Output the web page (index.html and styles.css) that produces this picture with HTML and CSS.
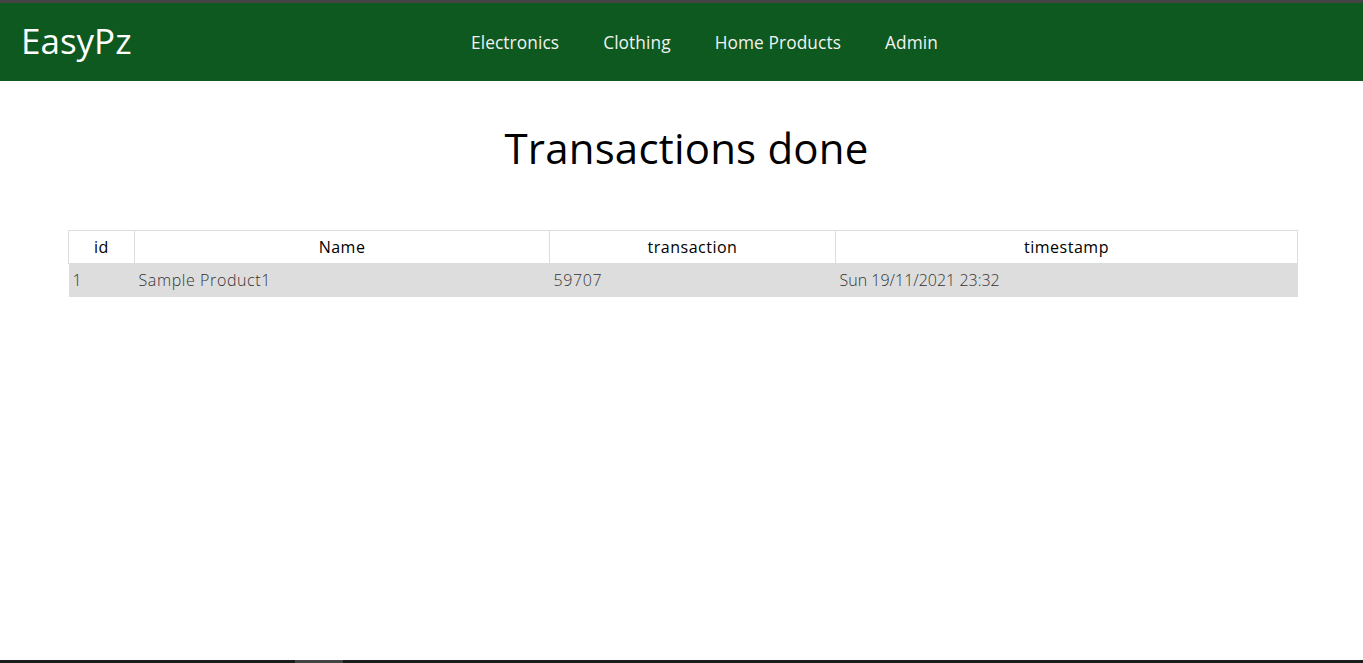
FILE: index.html
```html
<!DOCTYPE html>
<html lang="en">
<head>
<meta charset="utf-8">
<title>EasyPz - Transactions</title>
<link rel="stylesheet" href="styles.css">
</head>
<body>
<div class="topstrip"></div>
<header class="navbar">
  <a class="brand" href="#">EasyPz</a>
  <nav class="links">
    <a href="#">Electronics</a>
    <a href="#">Clothing</a>
    <a href="#">Home Products</a>
    <a href="#">Admin</a>
  </nav>
</header>
<main class="content">
  <h1 class="title">Transactions done</h1>
  <table class="tx">
    <thead>
      <tr>
        <th class="c-id">id</th>
        <th class="c-name">Name</th>
        <th class="c-tx">transaction</th>
        <th class="c-ts">timestamp</th>
      </tr>
    </thead>
    <tbody>
      <tr>
        <td>1</td>
        <td>Sample Product1</td>
        <td>59707</td>
        <td class="ts">Sun 19/11/2021 23:32</td>
      </tr>
    </tbody>
  </table>
</main>
<div class="bottomstrip"><span class="thumb"></span></div>
</body>
</html>
```
FILE: styles.css
```css
html, body {
  margin: 0;
  padding: 0;
  height: 100%;
}
body {
  font-family: "Open Sans", "Liberation Sans", sans-serif;
  background: #fff;
  color: #000;
  display: flex;
  flex-direction: column;
  overflow: hidden;
}
.topstrip {
  height: 3px;
  background: #444;
  flex: none;
}
.navbar {
  flex: none;
  height: 78px;
  background: #0d591f;
  display: flex;
  align-items: center;
}
.brand {
  color: #fff;
  text-decoration: none;
  font-size: 35px;
  margin-left: 21px;
  width: 428px;
  padding-bottom: 4px;
}
.links {
  display: flex;
}
.links a {
  color: #f2f2f2;
  text-decoration: none;
  font-size: 17.3px;
  letter-spacing: 0.1px;
  padding: 0 22px;
}
.content {
  flex: 1;
}
.title {
  margin: 40px 0 0;
  padding-left: 10px;
  height: 109px;
  font-weight: 400;
  font-size: 42px;
  letter-spacing: 0.2px;
  line-height: 54px;
  text-align: center;
}
.tx {
  width: 1229px;
  margin-left: 68px;
  border-collapse: collapse;
  table-layout: fixed;
  font-size: 16px;
  letter-spacing: 0.5px;
}
.tx th {
  height: 31px;
  border: 1px solid #ddd;
  font-weight: 400;
  text-align: center;
  padding: 0 0 1px;
}
.tx td {
  height: 31px;
  background: #ddd;
  color: #333;
  font-weight: 300;
  text-align: left;
  padding: 0 4px 2px;
  letter-spacing: 0.6px;
}
.tx td.ts {
  letter-spacing: 0;
}
.c-id { width: 65px; }
.c-name { width: 414px; }
.c-tx { width: 285px; }
.c-ts { width: 461px; }
.bottomstrip {
  flex: none;
  height: 3px;
  background: #1c1c1c;
  position: relative;
}
.thumb {
  position: absolute;
  left: 295px;
  top: 0;
  width: 48px;
  height: 3px;
  background: #454545;
}
```
